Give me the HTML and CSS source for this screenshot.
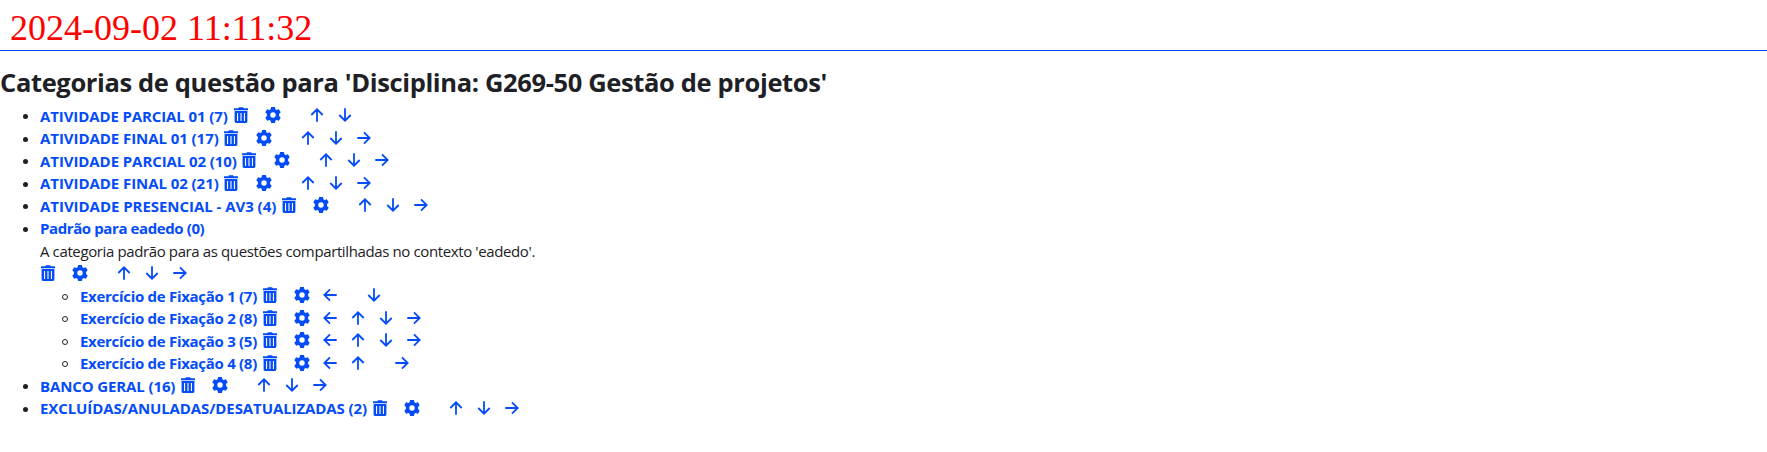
FILE: index.html
```html
<!DOCTYPE html>
<html lang="pt-br">
<head>
<meta charset="utf-8">
<title>Categorias de questão</title>
<link rel="stylesheet" href="styles.css">
</head>
<body>
<svg class="sprite" aria-hidden="true">
  <symbol id="trash" viewBox="0 0 16 16"><path fill-rule="evenodd" d="M1 1.200h4.200L6 .2h4l.8 1H15v2H1zM1.600 4h12.800v10.500q0 1.400-1.400 1.400H3Q1.600 15.900 1.600 14.500zM4 6v8h1.100V6zm3.450 0v8h1.100V6zm3.450 0v8H12V6z"/></symbol>
  <symbol id="gear" viewBox="0 0 16 16"><path fill-rule="evenodd" d="M6.100 0h3.800l.5 2.200 1.200.7 2.300-.7 1.800 3.100-1.600 1.600v2.200l1.600 1.600-1.800 3.100-2.300-.7-1.200.7-.5 2.200H6.100l-.5-2.200-1.200-.7-2.300.7L.3 10.700l1.600-1.600V6.900L.3 5.300l1.800-3.100 2.300.7 1.200-.7zM8 5.300a2.700 2.700 0 1 0 0 5.400 2.700 2.700 0 0 0 0-5.400z"/></symbol>
  <symbol id="up" viewBox="0 0 16 16"><path class="line" d="M8 14.700V2.300M2.300 8 8 2.300 13.700 8"/></symbol>
  <symbol id="down" viewBox="0 0 16 16"><path class="line" d="M8 1.300v12.400M2.300 8 8 13.700 13.700 8"/></symbol>
  <symbol id="left" viewBox="0 0 16 16"><path class="line" d="M14.700 8H2.300M8 2.300 2.300 8 8 13.700"/></symbol>
  <symbol id="right" viewBox="0 0 16 16"><path class="line" d="M1.300 8h12.400M8 2.300 13.700 8 8 13.700"/></symbol>
</svg>
<header class="stamp">2024-09-02 11:11:32</header>
<main>
<h2 class="title">Categorias de questão para 'Disciplina: G269-50 Gestão de projetos'</h2>
<ul class="list">
  <li class="row"><a class="label w-parcial1">ATIVIDADE PARCIAL 01 (7)</a><svg class="icon trash"><use href="#trash"/></svg><svg class="icon"><use href="#gear"/></svg><i class="spacer"></i><svg class="icon"><use href="#up"/></svg><svg class="icon"><use href="#down"/></svg></li>
  <li class="row"><a class="label w-final">ATIVIDADE FINAL 01 (17)</a><svg class="icon trash"><use href="#trash"/></svg><svg class="icon"><use href="#gear"/></svg><i class="spacer"></i><svg class="icon"><use href="#up"/></svg><svg class="icon"><use href="#down"/></svg><svg class="icon"><use href="#right"/></svg></li>
  <li class="row"><a class="label w-parcial2">ATIVIDADE PARCIAL 02 (10)</a><svg class="icon trash"><use href="#trash"/></svg><svg class="icon"><use href="#gear"/></svg><i class="spacer"></i><svg class="icon"><use href="#up"/></svg><svg class="icon"><use href="#down"/></svg><svg class="icon"><use href="#right"/></svg></li>
  <li class="row"><a class="label w-final">ATIVIDADE FINAL 02 (21)</a><svg class="icon trash"><use href="#trash"/></svg><svg class="icon"><use href="#gear"/></svg><i class="spacer"></i><svg class="icon"><use href="#up"/></svg><svg class="icon"><use href="#down"/></svg><svg class="icon"><use href="#right"/></svg></li>
  <li class="row"><a class="label w-presencial">ATIVIDADE PRESENCIAL - AV3 (4)</a><svg class="icon trash"><use href="#trash"/></svg><svg class="icon"><use href="#gear"/></svg><i class="spacer"></i><svg class="icon"><use href="#up"/></svg><svg class="icon"><use href="#down"/></svg><svg class="icon"><use href="#right"/></svg></li>
  <li class="row"><a class="label w-padrao">Padrão para eadedo (0)</a></li>
  <li class="line-row description">A categoria padrão para as questões compartilhadas no contexto 'eadedo'.</li>
  <li class="line-row"><svg class="icon trash"><use href="#trash"/></svg><svg class="icon"><use href="#gear"/></svg><i class="spacer"></i><svg class="icon"><use href="#up"/></svg><svg class="icon"><use href="#down"/></svg><svg class="icon"><use href="#right"/></svg></li>
  <li><ul class="list nested">
    <li class="row"><a class="label w-exercicio">Exercício de Fixação 1 (7)</a><svg class="icon trash"><use href="#trash"/></svg><svg class="icon"><use href="#gear"/></svg><svg class="icon"><use href="#left"/></svg><i class="spacer"></i><svg class="icon"><use href="#down"/></svg></li>
    <li class="row"><a class="label w-exercicio">Exercício de Fixação 2 (8)</a><svg class="icon trash"><use href="#trash"/></svg><svg class="icon"><use href="#gear"/></svg><svg class="icon"><use href="#left"/></svg><svg class="icon"><use href="#up"/></svg><svg class="icon"><use href="#down"/></svg><svg class="icon"><use href="#right"/></svg></li>
    <li class="row"><a class="label w-exercicio">Exercício de Fixação 3 (5)</a><svg class="icon trash"><use href="#trash"/></svg><svg class="icon"><use href="#gear"/></svg><svg class="icon"><use href="#left"/></svg><svg class="icon"><use href="#up"/></svg><svg class="icon"><use href="#down"/></svg><svg class="icon"><use href="#right"/></svg></li>
    <li class="row"><a class="label w-exercicio">Exercício de Fixação 4 (8)</a><svg class="icon trash"><use href="#trash"/></svg><svg class="icon"><use href="#gear"/></svg><svg class="icon"><use href="#left"/></svg><svg class="icon"><use href="#up"/></svg><i class="spacer"></i><svg class="icon"><use href="#right"/></svg></li>
  </ul></li>
  <li class="row"><a class="label w-banco">BANCO GERAL (16)</a><svg class="icon trash"><use href="#trash"/></svg><svg class="icon"><use href="#gear"/></svg><i class="spacer"></i><svg class="icon"><use href="#up"/></svg><svg class="icon"><use href="#down"/></svg><svg class="icon"><use href="#right"/></svg></li>
  <li class="row"><a class="label w-excluidas">EXCLUÍDAS/ANULADAS/DESATUALIZADAS (2)</a><svg class="icon trash"><use href="#trash"/></svg><svg class="icon"><use href="#gear"/></svg><i class="spacer"></i><svg class="icon"><use href="#up"/></svg><svg class="icon"><use href="#down"/></svg><svg class="icon"><use href="#right"/></svg></li>
</ul>
</main>
</body>
</html>
```
FILE: styles.css
```css
*, *::before { box-sizing: border-box; }
body { margin: 0; background: #fff; color: #1d2125; font: 15px/22.5px "Segoe UI", "Open Sans", "Noto Sans", sans-serif; overflow: hidden; }
.sprite { display: none; }
.stamp { height: 51px; padding: 7px 0 0 10px; border-bottom: 1px solid #044cf8; color: #f00; font: 36px/42px "Liberation Serif", serif; white-space: nowrap; }
.title { margin: 15px 0 6.600px; font-size: 25.500px; line-height: 32px; font-weight: 700; letter-spacing: -.36px; white-space: nowrap; }
.list { list-style: none; margin: 0; padding: 0 0 0 40px; }
.row, .line-row { display: flex; align-items: center; height: 22.500px; white-space: nowrap; }
.row::before { content: ""; width: 5px; height: 5px; margin: 2px 12px 0 -17px; border-radius: 50%; background: #1d2125; }
.nested .row::before { width: 6px; height: 6px; margin: 2px 12px 0 -18px; background: none; border: 1px solid #1d2125; }
.label { flex: none; color: #044cf8; font-weight: 700; }
.description { letter-spacing: -.38px; }
.w-parcial1 { width: 192.500px; letter-spacing: -.11px; }
.w-final { width: 183.300px; letter-spacing: -.06px; }
.w-parcial2 { width: 201.300px; letter-spacing: -.08px; }
.w-presencial { width: 240.700px; letter-spacing: -.04px; }
.w-padrao { letter-spacing: -.4px; }
.w-exercicio { width: 181.700px; letter-spacing: -.29px; }
.w-banco { width: 140px; letter-spacing: -.12px; }
.w-excluidas { width: 331.600px; letter-spacing: -.1px; }
.icon { flex: none; width: 16px; height: 16px; margin: 0 12px 1px 0; fill: #044cf8; }
.trash { margin-right: 16.300px; }
.spacer { width: 16px; }
.line { fill: none; stroke: #044cf8; stroke-width: 1.800; }
```
